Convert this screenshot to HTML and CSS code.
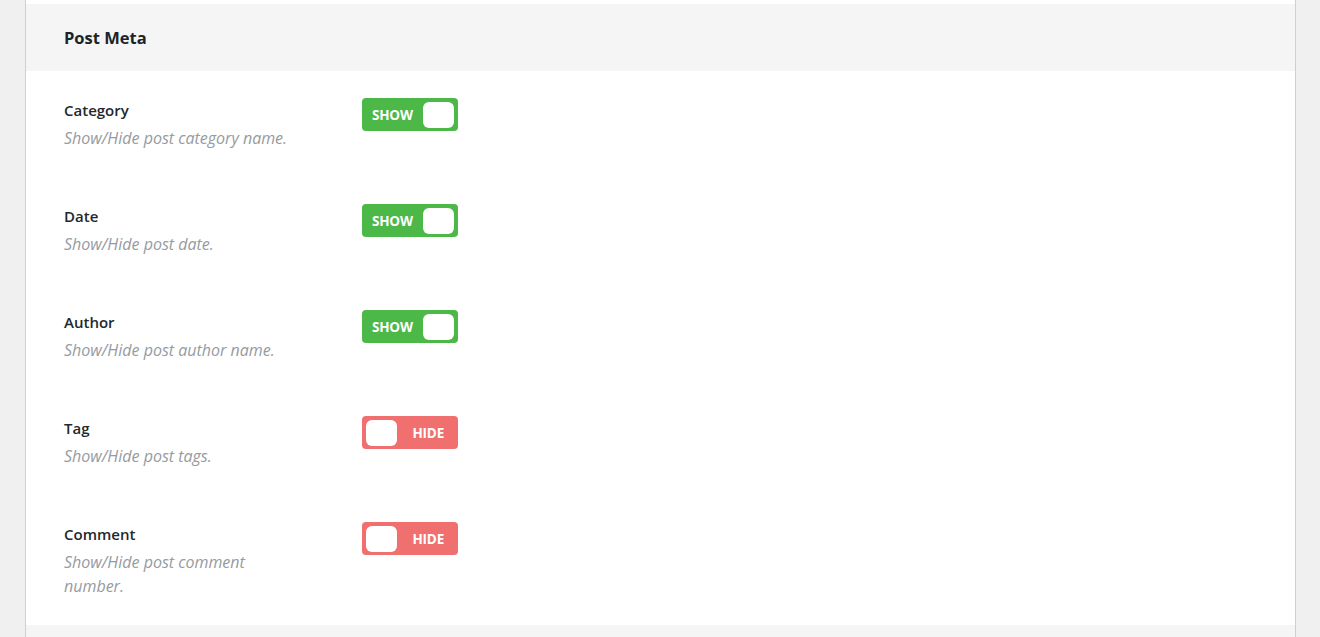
FILE: index.html
```html
<!DOCTYPE html>
<html>
<head>
<meta charset="utf-8">
<link rel="stylesheet" href="styles.css">
</head>
<body>
<div class="page">
  <div class="panel">
    <div class="panel-head"><h2 class="panel-title">Post Meta</h2></div>
    <div class="panel-body">
      <div class="row">
        <div class="info">
          <div class="label">Category</div>
          <div class="desc">Show/Hide post category name.</div>
        </div>
        <div class="toggle on"><span class="txt">SHOW</span><span class="knob"></span></div>
      </div>
      <div class="row">
        <div class="info">
          <div class="label">Date</div>
          <div class="desc">Show/Hide post date.</div>
        </div>
        <div class="toggle on"><span class="txt">SHOW</span><span class="knob"></span></div>
      </div>
      <div class="row">
        <div class="info">
          <div class="label">Author</div>
          <div class="desc">Show/Hide post author name.</div>
        </div>
        <div class="toggle on"><span class="txt">SHOW</span><span class="knob"></span></div>
      </div>
      <div class="row">
        <div class="info">
          <div class="label">Tag</div>
          <div class="desc">Show/Hide post tags.</div>
        </div>
        <div class="toggle off"><span class="knob"></span><span class="txt">HIDE</span></div>
      </div>
      <div class="row">
        <div class="info">
          <div class="label">Comment</div>
          <div class="desc">Show/Hide post comment number.</div>
        </div>
        <div class="toggle off"><span class="knob"></span><span class="txt">HIDE</span></div>
      </div>
    </div>
    <div class="panel-foot"></div>
  </div>
</div>
</body>
</html>
```
FILE: styles.css
```css
html, body {
  margin: 0;
  padding: 0;
  background: #f0f0f1;
  height: 637px;
  overflow: hidden;
}
body {
  font-family: "Open Sans", "Noto Sans", sans-serif;
  color: #23282d;
}
.page {
  padding: 0 24px 0 25px;
}
.panel {
  background: #fff;
  border-left: 1px solid #ccd0d4;
  border-right: 1px solid #ccd0d4;
  padding-top: 4px;
}
.panel-head {
  background: #f5f5f5;
  height: 67px;
  display: flex;
  align-items: center;
  padding-left: 38px;
}
.panel-title {
  margin: 0;
  font-size: 16.5px;
  font-weight: 700;
  color: #1d2327;
}
.panel-body {
  padding: 29px 0 0 38px;
}
.row {
  display: flex;
  align-items: flex-start;
  height: 106px;
}
.info {
  width: 232px;
  margin-right: 66px;
}
.label {
  font-size: 15px;
  font-weight: 600;
  line-height: 20px;
  color: #23282d;
}
.desc {
  margin-top: 6px;
  font-size: 16px;
  font-style: italic;
  line-height: 24px;
  color: #959ba0;
}
.toggle {
  width: 96px;
  height: 33px;
  border-radius: 4px;
  display: flex;
  align-items: center;
  box-sizing: border-box;
  color: #fff;
  font-size: 13.5px;
  font-weight: 700;
  margin-top: -2px;
}
.toggle.on {
  background: #4cb848;
  padding: 0 4px 0 10px;
  justify-content: space-between;
}
.toggle.off {
  background: #f07070;
  padding: 0 14px 0 4px;
  justify-content: space-between;
}
.knob {
  width: 31px;
  height: 26px;
  background: #fff;
  border-radius: 6px;
}
.txt {
  letter-spacing: -0.2px;
}
.panel-foot {
  background: #f5f5f5;
  height: 20px;
  margin-top: -5px;
}
```
